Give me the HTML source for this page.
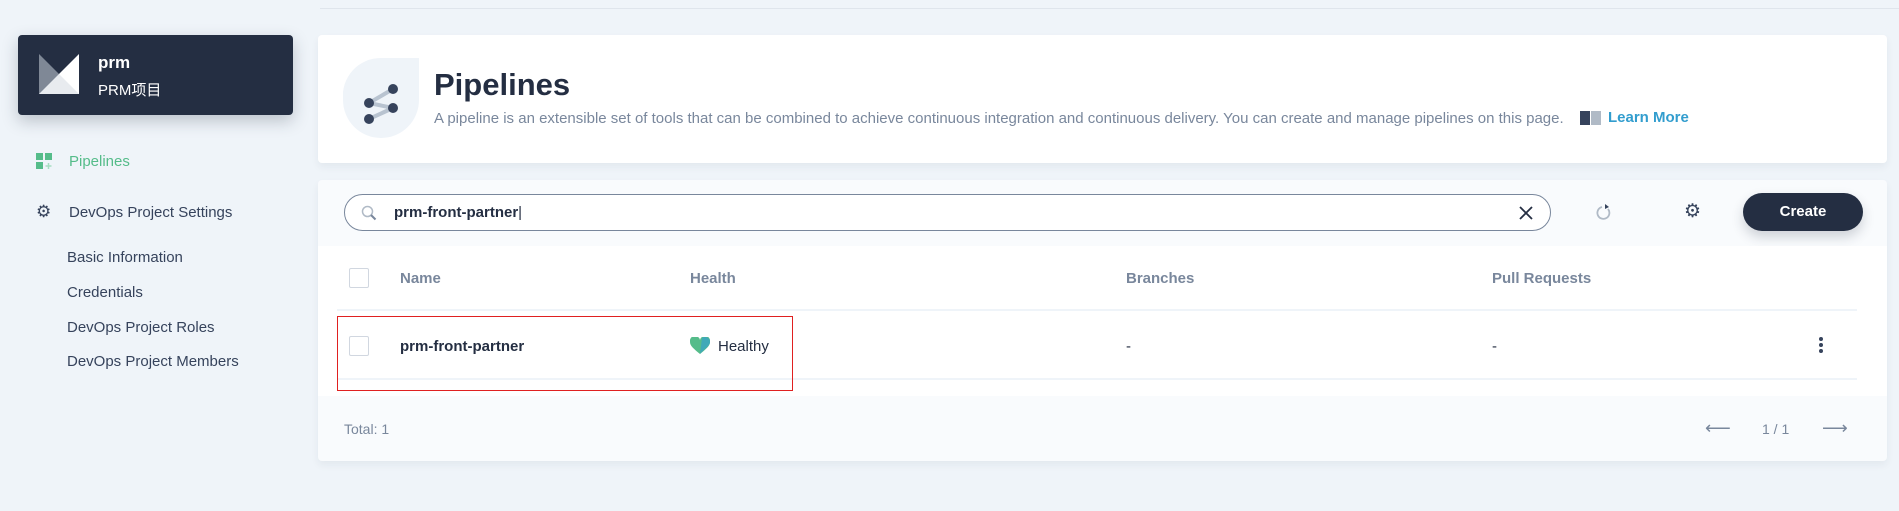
<!DOCTYPE html>
<html><head><meta charset="utf-8"><style>
*{box-sizing:border-box;margin:0;padding:0}
body{width:1899px;height:511px;background:#eff4f9;font-family:"Liberation Sans","Noto Sans CJK SC",sans-serif;position:relative;overflow:hidden;color:#242e42}
.a{position:absolute}
.topline{left:320px;top:8px;width:1579px;height:1px;background:#dfe5ec}
.proj{left:18px;top:35px;width:275px;height:80px;background:#242e42;border-radius:4px;box-shadow:0 6px 16px rgba(36,46,66,.25)}
.nav{font-size:15px;color:#36435c}
.sub{font-size:15px;color:#36435c;left:67px}
.card{background:#fff;border-radius:4px;box-shadow:0 4px 8px rgba(36,46,66,.06)}
.th{font-size:15px;font-weight:bold;color:#79879c;top:270px}
.cb{width:20px;height:20px;border:1px solid #d1d7e0;border-radius:2px;background:#fff}
</style></head><body>
<div class="a topline"></div>
<div class="a proj">
  <svg class="a" style="left:21px;top:19px" width="40" height="40" viewBox="0 0 40 40"><polygon points="0,0 20,20 20,40 0,40" fill="#7f8896"/><polygon points="40,0 40,40 20,40 20,20" fill="#fff"/><polygon points="0,40 20,20 40,40" fill="#e8ebef"/></svg>
  <div class="a" style="left:80px;top:18px;color:#fff;font-weight:bold;font-size:17px">prm</div>
  <div class="a" style="left:80px;top:44px;color:#fff;font-size:15px">PRM项目</div>
</div>
<svg class="a" style="left:36px;top:153px" width="17" height="17" viewBox="0 0 17 17"><rect x="0" y="0" width="7" height="7" fill="#55bc8a"/><rect x="9" y="0" width="7" height="7" fill="#55bc8a"/><rect x="0" y="9" width="7" height="7" fill="#55bc8a"/><path d="M12.5 10v6M9.5 13h6" stroke="#a6ddc2" stroke-width="1.5"/></svg>
<div class="a nav" style="left:69px;top:153px;color:#55bc8a">Pipelines</div>
<div class="a" style="left:36px;top:202px;font-size:17px;color:#36435c">⚙</div>
<div class="a nav" style="left:69px;top:204px">DevOps Project Settings</div>
<div class="a sub" style="top:249px">Basic Information</div>
<div class="a sub" style="top:284px">Credentials</div>
<div class="a sub" style="top:319px">DevOps Project Roles</div>
<div class="a sub" style="top:353px">DevOps Project Members</div>

<div class="a card" style="left:318px;top:35px;width:1569px;height:128px">
  <svg class="a" style="left:25px;top:23px" width="76" height="80" viewBox="0 0 76 80"><path d="M38 0H76V42A38 38 0 0 1 0 42A38 38 0 0 1 38 0Z" fill="#eff4f9"/><path d="M26 45L50 31M26 45L50 50M26 61L50 50" stroke="#b8c3d0" stroke-width="4"/><circle cx="26" cy="45" r="5" fill="#36435c"/><circle cx="50" cy="31" r="5" fill="#36435c"/><circle cx="50" cy="50" r="5" fill="#36435c"/><circle cx="26" cy="61" r="5" fill="#36435c"/></svg>
  <div class="a" style="left:116px;top:32px;font-size:31px;font-weight:bold">Pipelines</div>
  <div class="a" style="left:116px;top:75px;font-size:15px;color:#79879c;white-space:nowrap">A pipeline is an extensible set of tools that can be combined to achieve continuous integration and continuous delivery. You can create and manage pipelines on this page.</div>
  <svg class="a" style="left:1262px;top:75px" width="22" height="16" viewBox="0 0 22 16"><rect x="0" y="1" width="10" height="14" fill="#36435c"/><rect x="11" y="1" width="10" height="14" fill="#b0bac6"/></svg>
  <div class="a" style="left:1290px;top:74px;font-size:15px;font-weight:bold;color:#329dce">Learn More</div>
</div>

<div class="a card" style="left:318px;top:180px;width:1569px;height:281px;background:#f9fbfd;overflow:hidden">
  <div class="a" style="left:26px;top:14px;width:1207px;height:37px;border:1px solid #79879c;border-radius:19px;background:#fff"></div>
  <svg class="a" style="left:43px;top:25px" width="16" height="16" viewBox="0 0 16 16"><circle cx="6.5" cy="6.5" r="5" fill="none" stroke="#b0bac6" stroke-width="1.5"/><path d="M10 10l4.5 4.5" stroke="#79879c" stroke-width="2"/></svg>
  <div class="a" style="left:76px;top:24px;font-size:15px;font-weight:bold">prm-front-partner<span style="font-weight:normal">|</span></div>
  <svg class="a" style="left:1201px;top:26px" width="14" height="14" viewBox="0 0 14 14"><path d="M1 1L13 13M13 1L1 13" stroke="#242e42" stroke-width="1.8"/></svg>
  <svg class="a" style="left:1278px;top:23px" width="16" height="18" viewBox="0 0 16 18"><path d="M12 6A6 6 0 1 1 6 4" fill="none" stroke="#b0bac6" stroke-width="1.8"/><path d="M9 1L13 4L9 6Z" fill="#36435c"/></svg>
  <div class="a" style="left:1366px;top:20px;font-size:19px;color:#36435c">⚙</div>
  <div class="a" style="left:1425px;top:13px;width:120px;height:38px;border-radius:19px;background:#242e42;color:#fff;font-weight:bold;font-size:15px;text-align:center;line-height:38px;box-shadow:0 6px 12px rgba(36,46,66,.2)">Create</div>
  <div class="a" style="left:0;top:66px;width:1569px;height:150px;background:#fff"></div>
  <div class="a" style="left:19px;top:129px;width:1520px;height:2px;background:#eff4f9"></div>
  <div class="a" style="left:19px;top:198px;width:1520px;height:2px;background:#eff4f9"></div>
</div>
<div class="a cb" style="left:349px;top:268px"></div>
<div class="a th" style="left:400px">Name</div>
<div class="a th" style="left:690px">Health</div>
<div class="a th" style="left:1126px">Branches</div>
<div class="a th" style="left:1492px">Pull Requests</div>
<div class="a cb" style="left:349px;top:336px"></div>
<div class="a" style="left:400px;top:338px;font-size:15px;font-weight:bold">prm-front-partner</div>
<svg class="a" style="left:690px;top:337px" width="20" height="18" viewBox="0 0 20 18"><path d="M10 17C4 12 0 9 0 5A5 5 0 0 1 10 3A5 5 0 0 1 20 5C20 9 16 12 10 17Z" fill="#55bc8a"/><path d="M10 17C14 12 20 9 20 5A5 5 0 0 0 12 1Z" fill="#3fa9b8"/></svg>
<div class="a" style="left:718px;top:338px;font-size:15px">Healthy</div>
<div class="a" style="left:1126px;top:338px;font-size:15px">-</div>
<div class="a" style="left:1492px;top:338px;font-size:15px">-</div>
<svg class="a" style="left:1818px;top:336px" width="6" height="18" viewBox="0 0 6 18"><circle cx="3" cy="3" r="2" fill="#36435c"/><circle cx="3" cy="9" r="2" fill="#36435c"/><circle cx="3" cy="15" r="2" fill="#36435c"/></svg>
<div class="a" style="left:337px;top:316px;width:456px;height:75px;border:1px solid #e02020"></div>
<div class="a" style="left:344px;top:421px;font-size:14px;color:#79879c">Total: 1</div>
<div class="a" style="left:1705px;top:418px;font-size:18px;color:#79879c">⟵</div>
<div class="a" style="left:1762px;top:421px;font-size:14px;color:#79879c">1 / 1</div>
<div class="a" style="left:1822px;top:418px;font-size:18px;color:#79879c">⟶</div>
</body></html>
